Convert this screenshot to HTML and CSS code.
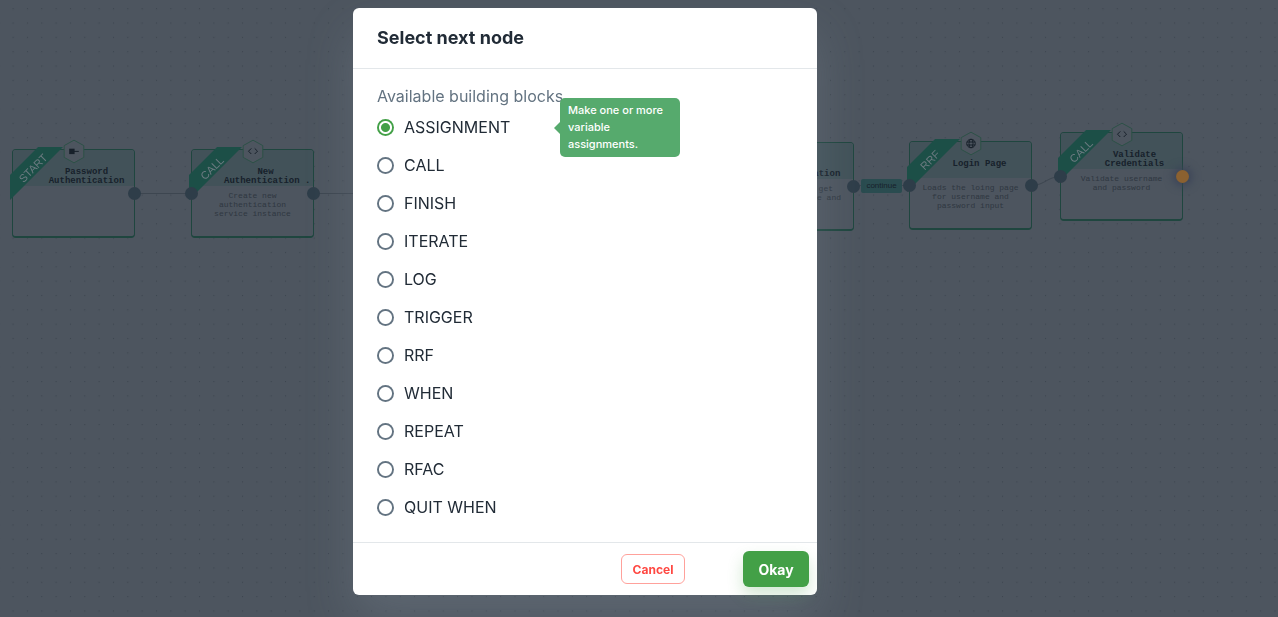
FILE: index.html
```html
<!DOCTYPE html>
<html lang="en">
<head>
<meta charset="utf-8">
<title>Select next node</title>
<link rel="stylesheet" href="styles.css">
</head>
<body>
<main class="canvas" aria-hidden="true">
  <svg class="canvas-art">
    <defs>
      <pattern id="dots" x="5.9" y="15.8" width="14.34" height="14.34" patternUnits="userSpaceOnUse">
        <circle cx="7.2" cy="7.2" r=".6" fill="#3b434d"/>
      </pattern>
    </defs>
    <rect width="100%" height="100%" fill="url(#dots)"/>
    <g fill="none" stroke="#3d4650">
      <path d="M134 193.500H192M313 193.500H360M853 185.500H910M1031 185.500C1046 185 1046 177 1061 176.500"/>
    </g>
  </svg>

  <article class="node start">
    <header class="node-head"><h2 class="node-title">Password<br>Authentication</h2></header>
    <span class="ribbon"><span class="ribbon-text">START</span></span>
    <svg class="badge" viewBox="0 0 22 25"><path class="hex" d="M11 1.200L20.800 6.600V18.400L11 23.800L1.200 18.400V6.600Z"/><path d="M6.200 9.700h5.400v5.400H6.200z" fill="#17202a"/><path d="M11 12.400h4.800" stroke="#17202a"/></svg>
    <i class="port out"></i>
  </article>

  <article class="node create">
    <header class="node-head"><h2 class="node-title">New<br>Authentication .</h2></header>
    <span class="ribbon"><span class="ribbon-text">CALL</span></span>
    <svg class="badge" viewBox="0 0 22 25"><path class="hex" d="M11 1.200L20.800 6.600V18.400L11 23.800L1.200 18.400V6.600Z"/><path class="glyph" d="M9.300 9.400L6.500 12.200L9.300 15M12.700 9.400L15.500 12.200L12.700 15"/></svg>
    <p class="node-text">Create new authentication service instance</p>
    <i class="port in"></i><i class="port out"></i>
  </article>

  <article class="node target">
    <header class="node-head"><h2 class="node-title">Get<br>Authentication</h2></header>
    <p class="node-text"><span class="node-line">Service to get</span><br>the name and</p>
    <i class="port out"></i>
  </article>

  <span class="edge-label">continue</span>

  <article class="node login">
    <header class="node-head"><h2 class="node-title">Login Page</h2></header>
    <span class="ribbon"><span class="ribbon-text">RRF</span></span>
    <svg class="badge" viewBox="0 0 22 25"><path class="hex" d="M11 1.200L20.800 6.600V18.400L11 23.800L1.200 18.400V6.600Z"/><g class="globe"><circle cx="11" cy="12.500" r="4.300"/><ellipse cx="11" cy="12.500" rx="2" ry="4.300"/><path d="M7 11h8M7 14h8"/></g></svg>
    <p class="node-text">Loads the loing page for username and password input</p>
    <i class="port in"></i><i class="port out"></i>
  </article>

  <article class="node validate">
    <header class="node-head"><h2 class="node-title">Validate<br>Credentials</h2></header>
    <span class="ribbon"><span class="ribbon-text">CALL</span></span>
    <svg class="badge" viewBox="0 0 22 25"><path class="hex" d="M11 1.200L20.800 6.600V18.400L11 23.800L1.200 18.400V6.600Z"/><path class="glyph" d="M9.300 9.400L6.500 12.200L9.300 15M12.700 9.400L15.500 12.200L12.700 15"/></svg>
    <p class="node-text">Validate username and password</p>
    <i class="port in"></i><i class="port out active"></i>
  </article>
</main>

<div class="overlay">
  <form class="dialog" role="dialog" aria-labelledby="dialog-title">
    <h1 class="dialog-title" id="dialog-title">Select next node</h1>
    <fieldset class="blocks">
      <legend class="blocks-label">Available building blocks</legend>
      <div class="row">
        <label class="option"><input class="radio" type="radio" name="block" checked>ASSIGNMENT</label>
        <span class="tooltip" role="tooltip">Make one or more variable assignments.</span>
      </div>
      <label class="option"><input class="radio" type="radio" name="block">CALL</label>
      <label class="option"><input class="radio" type="radio" name="block">FINISH</label>
      <label class="option"><input class="radio" type="radio" name="block">ITERATE</label>
      <label class="option"><input class="radio" type="radio" name="block">LOG</label>
      <label class="option"><input class="radio" type="radio" name="block">TRIGGER</label>
      <label class="option"><input class="radio" type="radio" name="block">RRF</label>
      <label class="option"><input class="radio" type="radio" name="block">WHEN</label>
      <label class="option"><input class="radio" type="radio" name="block">REPEAT</label>
      <label class="option"><input class="radio" type="radio" name="block">RFAC</label>
      <label class="option"><input class="radio" type="radio" name="block">QUIT WHEN</label>
    </fieldset>
    <footer class="actions">
      <button class="button cancel" type="button">Cancel</button>
      <button class="button okay" type="button">Okay</button>
    </footer>
  </form>
</div>
</body>
</html>
```
FILE: styles.css
```css
* { box-sizing: border-box; }

body {
  margin: 0;
  min-height: 100vh;
  background: #4d555f;
  color: #212b36;
  font-family: Inter, Roboto, sans-serif;
  overflow: hidden;
}

/* Flow canvas */
.canvas { position: fixed; inset: 0; }
.canvas-art { position: absolute; width: 100%; height: 100%; }

.node {
  position: absolute;
  width: 123px;
  height: 89px;
  border: 1px solid #1f463f;
  border-bottom-width: 2px;
  border-radius: 4px;
  background: #4d555f;
  font-family: "Liberation Mono", monospace;
}
.start { left: 12px; top: 149px; }
.create { left: 191px; top: 149px; }
.target { left: 731px; top: 142px; }
.login { left: 909px; top: 141px; }
.validate { left: 1060px; top: 132px; }

.node-head {
  height: 36px;
  padding: 18px 6px 0 32px;
  border-radius: 2px 2px 0 0;
  background: #425259;
}
.target .node-head { padding-right: 12px; }
.login .node-head { padding-right: 14px; }
.node-title {
  margin: 0;
  font-size: 9px;
  line-height: 9px;
  font-weight: 700;
  text-align: center;
  white-space: nowrap;
  color: #17212b;
}
.node-text {
  margin: 0;
  padding: 5px 12px;
  font-size: 8px;
  line-height: 9px;
  text-align: center;
  color: #2f3741;
}
.target .node-text { text-align: right; }
.node-line { padding-right: 8px; }

.ribbon {
  position: absolute;
  left: -3px;
  top: -3px;
  width: 53px;
  height: 53px;
  background: #1c4f47;
  clip-path: polygon(0 53%, 53% 0, 100% 0, 0 100%);
}
.ribbon-text {
  position: absolute;
  left: -7px;
  top: 15px;
  width: 60px;
  font: 11px/12px "Liberation Sans", sans-serif;
  text-align: center;
  color: #6b7a80;
  transform: rotate(-45deg);
}

.badge { position: absolute; left: 50px; top: -11px; width: 22px; height: 25px; }
.hex { fill: #4d555f; stroke: #2d5147; }
.glyph { fill: none; stroke: #17202a; }
.globe { fill: none; stroke: #17202a; }

.port {
  position: absolute;
  top: 37px;
  width: 13px;
  height: 13px;
  border-radius: 50%;
  background: #2e3d49;
}
.in { left: -7px; }
.out { right: -7px; }
.active { background: #8b6130; box-shadow: 0 0 8px 3px #3b4457; }

.edge-label {
  position: absolute;
  left: 861px;
  top: 179px;
  width: 41px;
  border-radius: 2px;
  background: #2a4c50;
  font: 8px/14px "Liberation Sans", sans-serif;
  text-align: center;
  color: #17212b;
}

/* Dialog */
.overlay {
  position: relative;
  display: flex;
  justify-content: center;
  padding: 8px 108px 22px 0;
}
.dialog {
  width: 464px;
  border-radius: 6px;
  background: #fff;
  box-shadow: 0 24px 48px rgba(145, 158, 171, .24);
}
.dialog-title {
  margin: 0;
  padding: 16px 24px;
  border-bottom: 1px solid #e3e7ea;
  font-size: 18px;
  line-height: 28px;
  font-weight: 700;
}
.blocks {
  display: flex;
  flex-direction: column;
  margin: 0;
  padding: 16px 24px;
  border: 0;
}
.blocks-label {
  float: left;
  padding: 0;
  font-size: 16px;
  line-height: 23px;
  color: #637381;
}
.row { position: relative; display: flex; }
.option {
  display: flex;
  align-items: center;
  gap: 10px;
  height: 38px;
  font-size: 16px;
}
.radio {
  appearance: none;
  width: 17px;
  height: 17px;
  margin: 0;
  border-radius: 50%;
  background: radial-gradient(circle, transparent 6px, #637381 7px);
}
.radio:checked {
  background: radial-gradient(circle, #43a047 4px, transparent 5px, transparent 6px, #43a047 7px);
}
.tooltip {
  position: absolute;
  left: 183px;
  top: -10px;
  width: 120px;
  padding: 4px 8px;
  border-radius: 5px;
  background: #56aa6d;
  color: #fff;
  font-size: 11px;
  line-height: 17px;
  font-weight: 500;
}
.tooltip::before {
  content: "";
  position: absolute;
  left: -6px;
  top: 24px;
  border: 6px solid transparent;
  border-left: 0;
  border-right-color: #56aa6d;
}
.actions {
  display: flex;
  align-items: center;
  justify-content: flex-end;
  gap: 58px;
  padding: 8px;
  border-top: 1px solid #e3e7ea;
}
.button { font-family: inherit; font-weight: 700; border-radius: 6px; }
.cancel {
  width: 64px;
  height: 30px;
  padding: 0;
  border: 1px solid #ffa19b;
  background: #fff;
  color: #ff4842;
  font-size: 12px;
}
.okay {
  width: 66px;
  height: 36px;
  padding: 0;
  border: 0;
  background: #43a047;
  color: #fff;
  font-size: 14px;
  box-shadow: 0 8px 16px rgba(67, 160, 71, .24);
}
```
